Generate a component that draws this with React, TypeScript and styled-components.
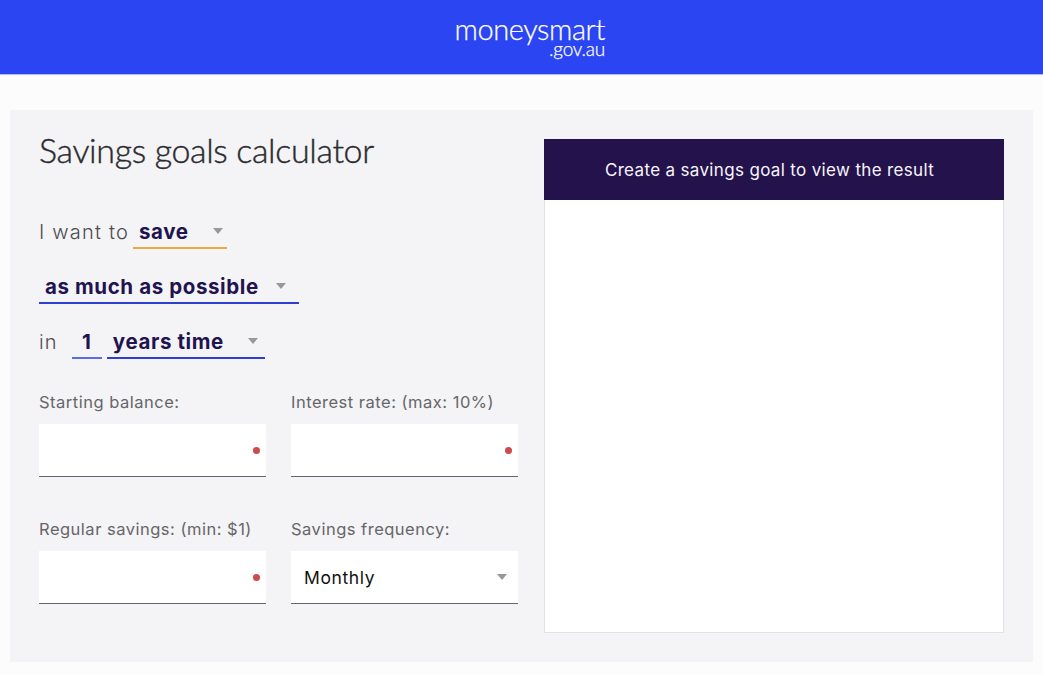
import React from "react";
import styled, { createGlobalStyle } from "styled-components";

const GlobalStyle = createGlobalStyle`
  html, body {
    margin: 0;
    padding: 0;
    background-color: #fdfcfd;
    font-family: "Inter", "Open Sans", sans-serif;
  }
`;

const Page = styled.div`
  width: 1043px;
  height: 674px;
  overflow: hidden;
`;

const TopBar = styled.header`
  height: 75px;
  box-sizing: border-box;
  background-color: #2c45f2;
  border-bottom: 1px solid #a9bcfb;
  display: flex;
  justify-content: center;
  padding-top: 16px;
`;

const Logo = styled.div`
  width: 150px;
  margin-left: 17px;
  display: flex;
  flex-direction: column;
  align-items: flex-end;
  color: #fff;
  font-family: "Lato", sans-serif;
  font-weight: 300;
  -webkit-text-stroke: 0.25px #fff;
`;

const LogoMain = styled.span`
  font-size: 29px;
  line-height: 26px;
  letter-spacing: -0.4px;
`;

const LogoSub = styled.span`
  font-size: 19px;
  line-height: 15px;
  letter-spacing: -0.2px;
  margin-top: -1px;
`;

const Panel = styled.main`
  margin: 35px 10px 0;
  height: 552px;
  box-sizing: border-box;
  background-color: #f4f3f5;
  padding: 29px 29px 30px 29px;
  display: flex;
  justify-content: space-between;
`;

const FormColumn = styled.section`
  width: 479px;
`;

const Title = styled.h1`
  margin: -2px 0 50px;
  font-family: "Lato", sans-serif;
  font-weight: 300;
  font-size: 34px;
  line-height: 26px;
  letter-spacing: -0.35px;
  color: #2b2b30;
  -webkit-text-stroke: 0.4px #2b2b30;
`;

const Sentence = styled.div`
  display: flex;
  align-items: flex-end;
  height: 36px;
  margin-bottom: 19px;
  color: #4c4c52;
  font-size: 20px;
`;

const SentenceLabel = styled.span<{ $gap: number }>`
  margin-right: ${(p) => p.$gap}px;
  padding-bottom: 4px;
  line-height: 26px;
  font-weight: 300;
  letter-spacing: 1.2px;
`;

const InlineSelect = styled.div<{ $width: number; $accent: string; $caretPad?: number }>`
  width: ${(p) => p.$width}px;
  box-sizing: border-box;
  display: flex;
  align-items: center;
  justify-content: space-between;
  height: 30px;
  padding: 0 ${(p) => p.$caretPad ?? 0}px 4px 6px;
  border-bottom: 2px solid ${(p) => p.$accent};
  color: #1f1450;
  font-size: 20.5px;
  font-weight: 700;
  letter-spacing: 0.6px;
`;

const NumberField = styled(InlineSelect)`
  justify-content: center;
  padding: 0 0 4px;
  margin-right: 5px;
`;

const Caret = styled.span`
  width: 0;
  height: 0;
  border-left: 5.5px solid transparent;
  border-right: 5.5px solid transparent;
  border-top: 6px solid #98989c;
`;

const FieldGrid = styled.div`
  display: grid;
  grid-template-columns: 227px 227px;
  column-gap: 25px;
  row-gap: 41px;
  margin-top: 32px;
`;

const FieldLabel = styled.label`
  display: block;
  margin-bottom: 11px;
  font-size: 16.5px;
  line-height: 22px;
  letter-spacing: 0.5px;
  color: #66666a;
`;

const FieldBox = styled.div`
  height: 53px;
  box-sizing: border-box;
  background-color: #fff;
  border-bottom: 1px solid #66666a;
  display: flex;
  align-items: center;
  justify-content: space-between;
  padding: 0 6px 0 13px;
  font-size: 17.5px;
  letter-spacing: 0.6px;
  color: #111;
`;

const RequiredDot = styled.span`
  width: 7px;
  height: 7px;
  border-radius: 50%;
  background-color: #cf4a4d;
  margin-left: auto;
`;

const SelectBox = styled(FieldBox)`
  padding-right: 11px;
`;

const ResultCard = styled.aside`
  width: 460px;
  height: 494px;
  box-sizing: border-box;
  background-color: #fff;
  border: 1px solid #e3e1e6;
`;

const ResultHeader = styled.div`
  height: 61px;
  margin: -1px -1px 0;
  padding-right: 9px;
  display: flex;
  align-items: center;
  justify-content: center;
  background-color: #24124d;
  color: #f7f5fb;
  font-size: 17px;
  letter-spacing: 0.34px;
`;

const fields = [
  { label: "Starting balance:" },
  { label: "Interest rate: (max: 10%)" },
  { label: "Regular savings: (min: $1)" },
];

export default function App() {
  return (
    <Page>
      <GlobalStyle />
      <TopBar>
        <Logo>
          <LogoMain>moneysmart</LogoMain>
          <LogoSub>.gov.au</LogoSub>
        </Logo>
      </TopBar>
      <Panel>
        <FormColumn>
          <Title>Savings goals calculator</Title>
          <Sentence>
            <SentenceLabel $gap={4}>I want to</SentenceLabel>
            <InlineSelect $width={94} $accent="#eda93f" $caretPad={4}>
              save <Caret />
            </InlineSelect>
          </Sentence>
          <Sentence>
            <InlineSelect $width={260} $accent="#2d3fcf" $caretPad={13}>
              as much as possible <Caret />
            </InlineSelect>
          </Sentence>
          <Sentence>
            <SentenceLabel $gap={14}>in</SentenceLabel>
            <NumberField $width={30} $accent="#5a70d8">
              1
            </NumberField>
            <InlineSelect $width={158} $accent="#2d3fcf" $caretPad={7}>
              years time <Caret />
            </InlineSelect>
          </Sentence>
          <FieldGrid>
            {fields.map((field) => (
              <div key={field.label}>
                <FieldLabel>{field.label}</FieldLabel>
                <FieldBox>
                  <RequiredDot />
                </FieldBox>
              </div>
            ))}
            <div>
              <FieldLabel>Savings frequency:</FieldLabel>
              <SelectBox>
                Monthly <Caret />
              </SelectBox>
            </div>
          </FieldGrid>
        </FormColumn>
        <ResultCard>
          <ResultHeader>Create a savings goal to view the result</ResultHeader>
        </ResultCard>
      </Panel>
    </Page>
  );
}
